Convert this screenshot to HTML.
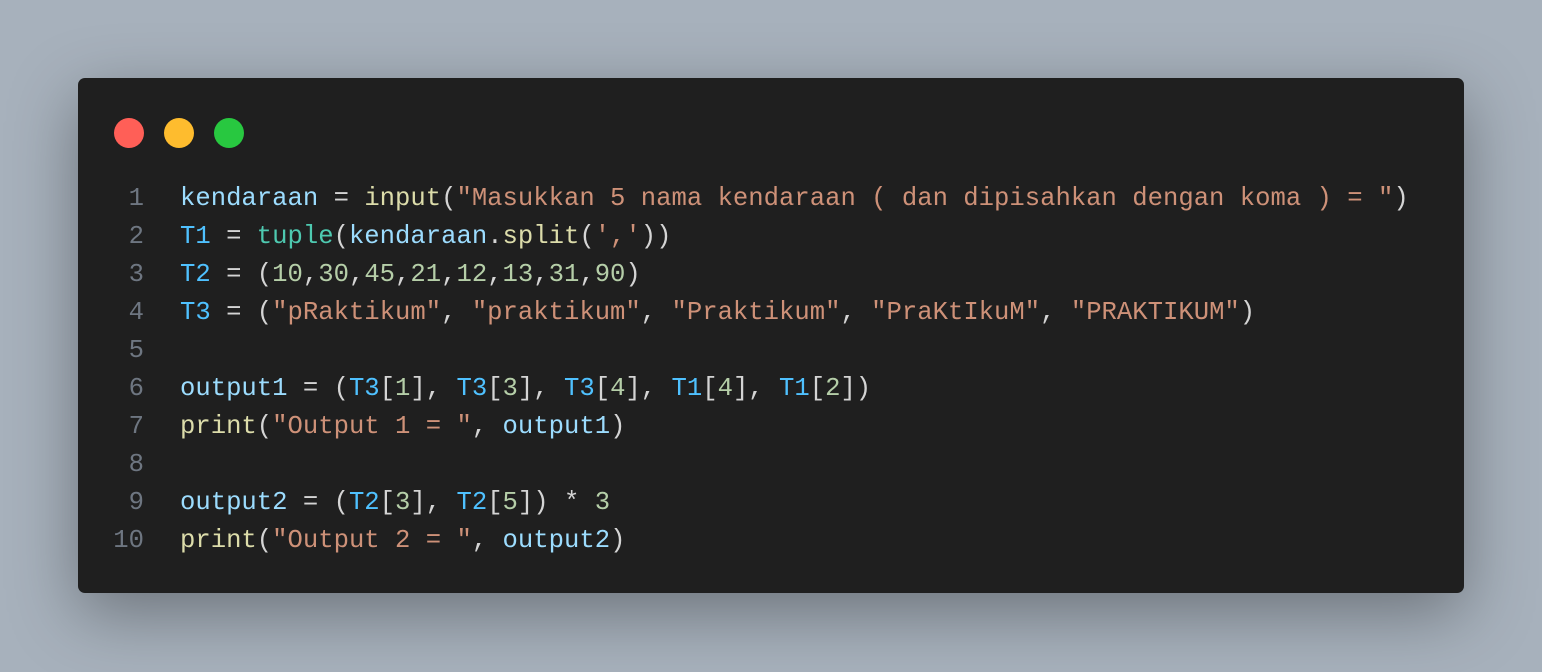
<!DOCTYPE html>
<html><head><style>
html,body{margin:0;padding:0;}
body{width:1542px;height:672px;background:#a7b1bc;overflow:hidden;position:relative;font-family:"Liberation Mono",monospace;}
.win{position:absolute;left:78px;top:78px;width:1386px;height:515px;background:#1f1f1f;border-radius:7px;box-shadow:0 20px 68px rgba(0,0,0,0.35);}
.dot{position:absolute;top:40px;width:30px;height:30px;border-radius:50%;}
.code{position:absolute;left:0;top:102px;font-size:25.6px;line-height:38px;white-space:pre;color:#d4d4d4;}
.ln{display:inline-block;width:66px;text-align:right;color:#6e7681;margin-right:36px;}
.v{color:#9cdcfe}.f{color:#dcdcaa}.s{color:#ce9178}.c{color:#4fc1ff}.n{color:#b5cea8}.t{color:#4ec9b0}
</style></head><body>
<div class="win">
<div class="dot" style="left:36px;background:#ff5f57"></div>
<div class="dot" style="left:86px;background:#febc2e"></div>
<div class="dot" style="left:136px;background:#28c840"></div>
<div class="code"><span class="ln">1</span><span class="v">kendaraan</span> = <span class="f">input</span>(<span class="s">"Masukkan 5 nama kendaraan ( dan dipisahkan dengan koma ) = "</span>)
<span class="ln">2</span><span class="c">T1</span> = <span class="t">tuple</span>(<span class="v">kendaraan</span>.<span class="f">split</span>(<span class="s">','</span>))
<span class="ln">3</span><span class="c">T2</span> = (<span class="n">10</span>,<span class="n">30</span>,<span class="n">45</span>,<span class="n">21</span>,<span class="n">12</span>,<span class="n">13</span>,<span class="n">31</span>,<span class="n">90</span>)
<span class="ln">4</span><span class="c">T3</span> = (<span class="s">"pRaktikum"</span>, <span class="s">"praktikum"</span>, <span class="s">"Praktikum"</span>, <span class="s">"PraKtIkuM"</span>, <span class="s">"PRAKTIKUM"</span>)
<span class="ln">5</span>
<span class="ln">6</span><span class="v">output1</span> = (<span class="c">T3</span>[<span class="n">1</span>], <span class="c">T3</span>[<span class="n">3</span>], <span class="c">T3</span>[<span class="n">4</span>], <span class="c">T1</span>[<span class="n">4</span>], <span class="c">T1</span>[<span class="n">2</span>])
<span class="ln">7</span><span class="f">print</span>(<span class="s">"Output 1 = "</span>, <span class="v">output1</span>)
<span class="ln">8</span>
<span class="ln">9</span><span class="v">output2</span> = (<span class="c">T2</span>[<span class="n">3</span>], <span class="c">T2</span>[<span class="n">5</span>]) * <span class="n">3</span>
<span class="ln">10</span><span class="f">print</span>(<span class="s">"Output 2 = "</span>, <span class="v">output2</span>)</div>
</div>
</body></html>
